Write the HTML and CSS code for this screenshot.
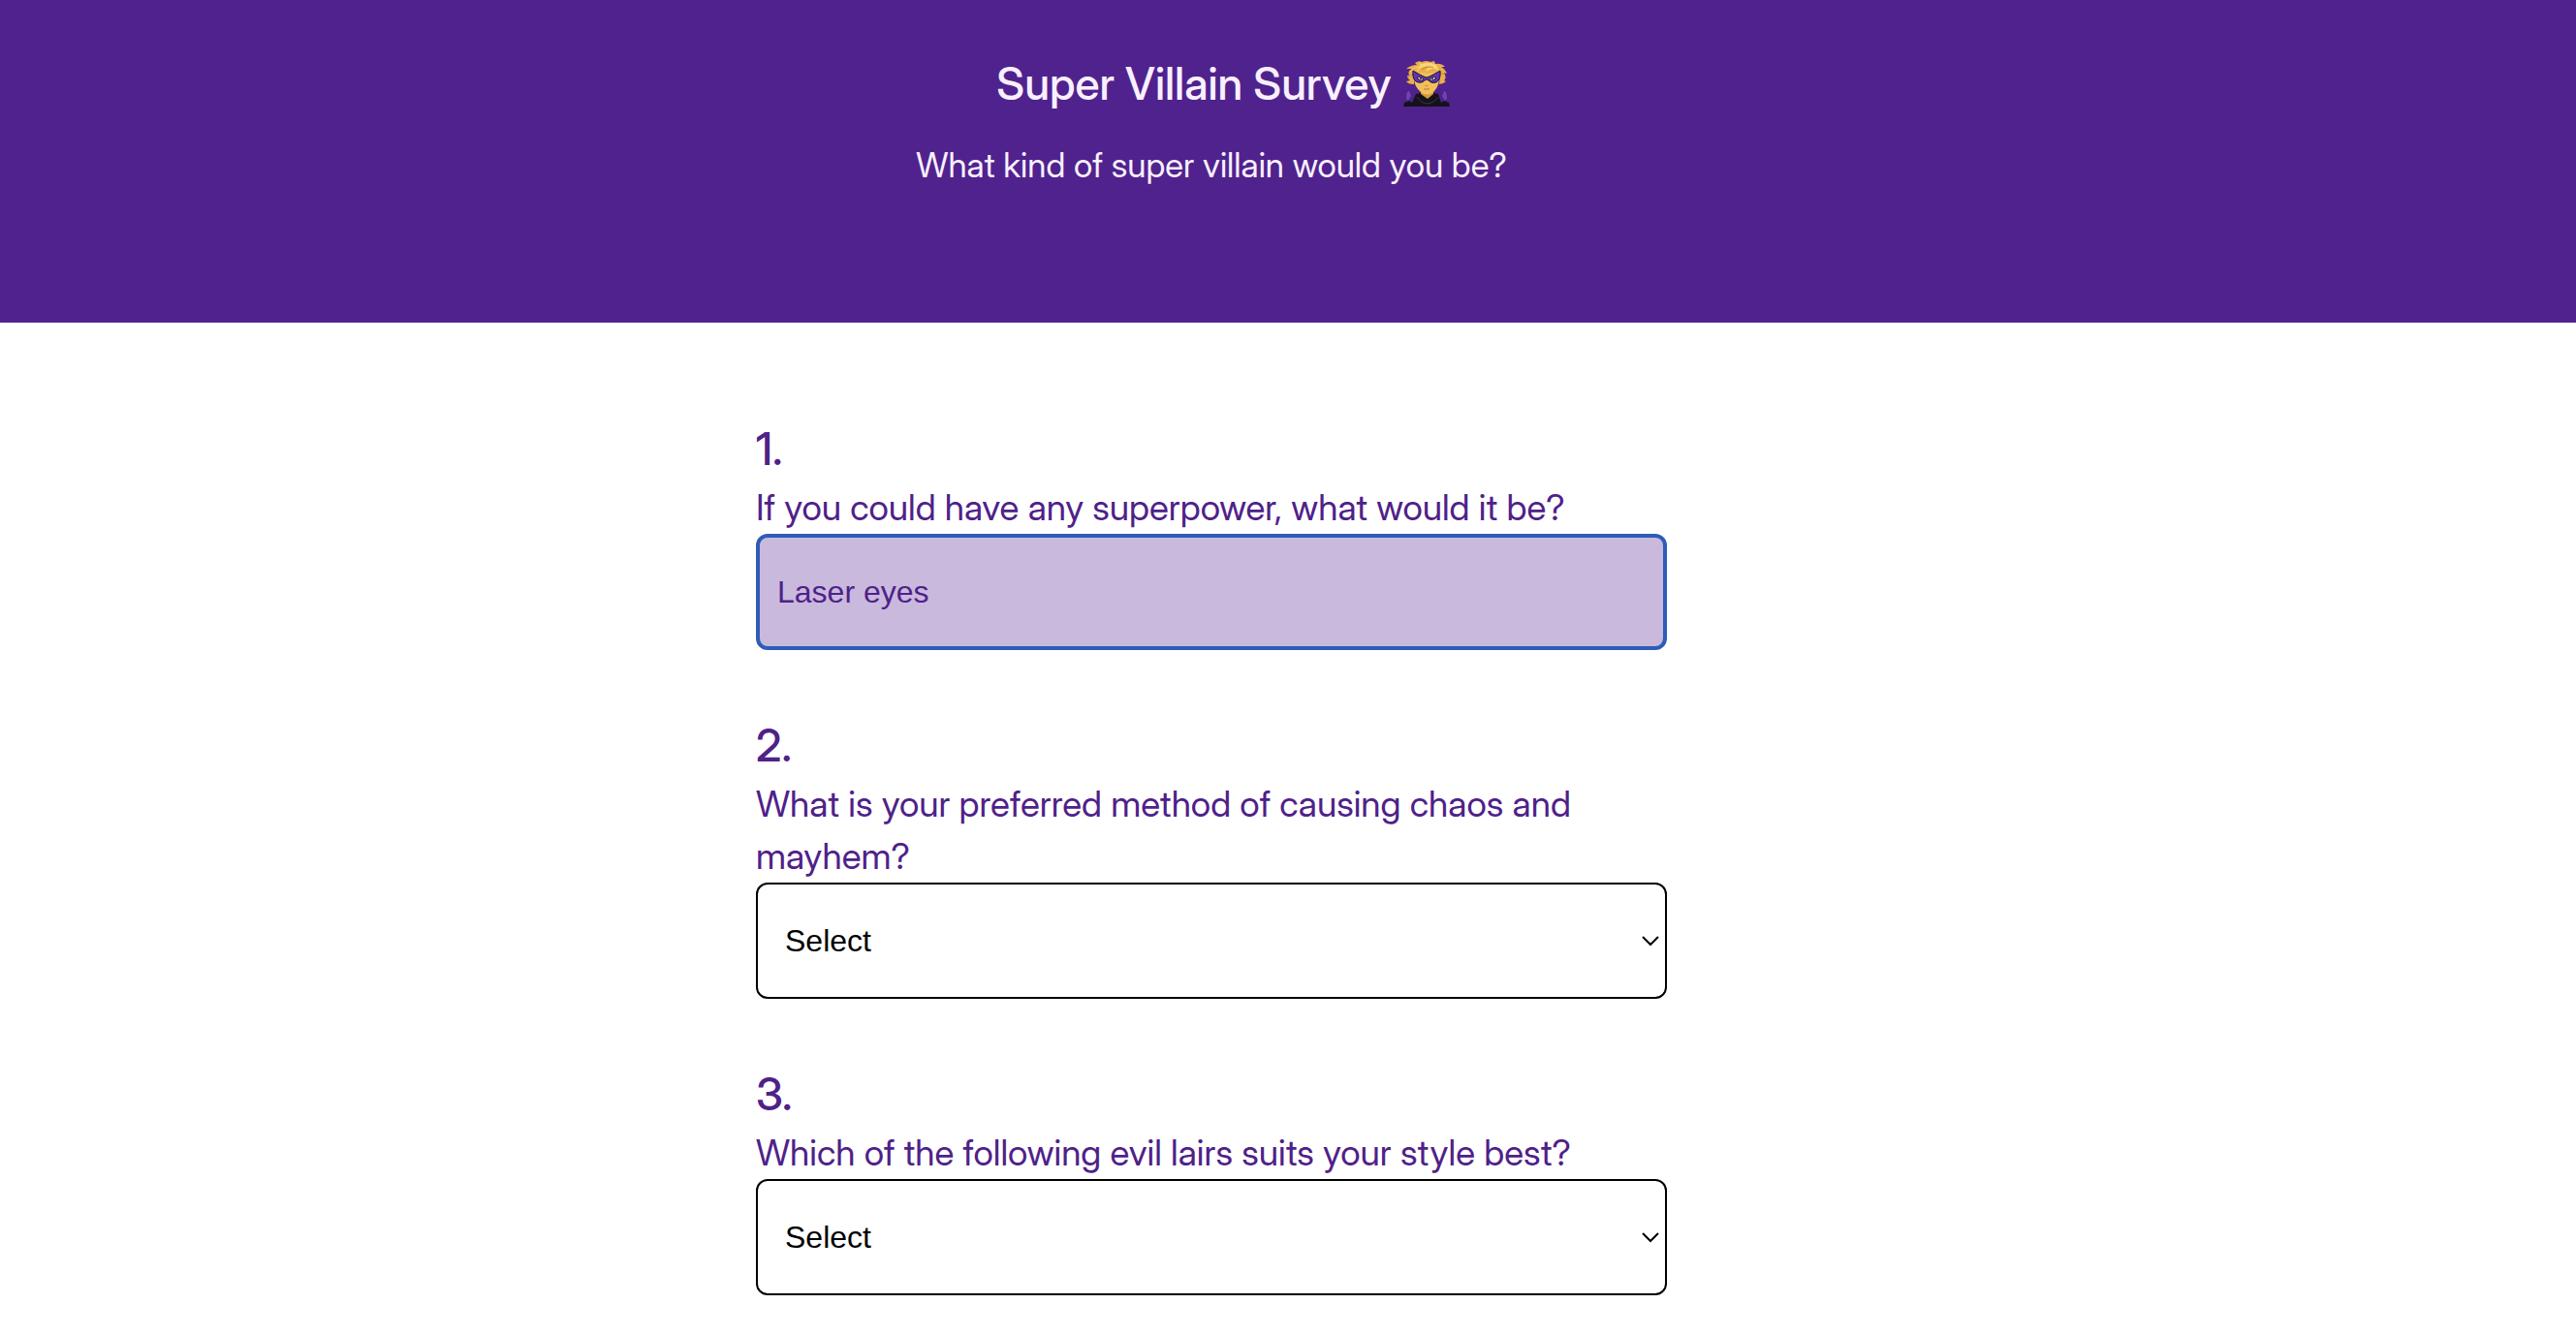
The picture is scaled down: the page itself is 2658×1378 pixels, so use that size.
FILE: index.html
```html
<!DOCTYPE html>
<html lang="en">
<head>
<meta charset="utf-8">
<meta name="viewport" content="width=device-width, initial-scale=1">
<title>Super Villain Survey</title>
<link rel="stylesheet" href="styles.css">
</head>
<body>
<header class="page-grid banner">
  <div class="banner-text">
    <h1 class="title">
      <span>Super Villain Survey</span>
      <svg class="villain" viewBox="0 0 48 48" role="img" aria-label="Supervillain">
        <path fill="#4b2488" d="M1 45C0 38 1 31 4 30Q8 31 11 38L12 47H36L37 38Q40 31 44 30C47 31 48 39 47 45Z"/>
        <path fill="#7340b4" d="M3 40C3 34 4 32 6 32L8 37 5 42ZM45 40C45 34 44 32 42 32L40 37 43 42Z"/>
        <path fill="#15121b" d="M0 48L1 44 6 42 9 44 13 35 18 34 24 39 31 34 36 35 39 44 42 42 47 44 48 48Z"/>
        <path fill="#d79a3c" d="M18 28H31V35L25 40 18 35Z"/>
        <path fill="#f2c05a" d="M12 13C14 8 34 8 36 13C38 22 36 28 31 33Q24 38 18 33C12 28 10 22 12 13Z"/>
        <path fill="#e8b04a" d="M11 25Q5 25 3 22L7 21Q4 19 4 16L6 16Q4 11 9 9L3 9Q8 5 14 5L12 3Q16 0 19 2Q24 0 28 2L32 1L33 4Q39 3 43 7L39 7Q43 9 45 14L42 13Q45 18 42 21L44 22Q41 25 37 25L38 15Q31 11 25 14Q17 11 11 15Z"/>
        <path fill="#f7d67a" d="M7 13Q10 7 17 8Q13 10 14 12Q19 5 28 7Q23 9 24 12Q30 6 37 11Q35 7 34 5Q26 1 20 4L16 3Q20 6 14 7Q9 7 7 13Z"/>
        <path fill="none" stroke="#c68a32" d="M5 18Q8 14 10 15M39 13L42 15M19 10Q25 5 31 8"/>
        <path fill="#6134b2" stroke="#21153f" d="M10 11Q15 14 21 17Q24 19 27 17Q33 14 38 11Q39 20 34 23Q29 25 26 21Q24 19 22 21Q18 25 13 22Q9 19 10 11Z"/>
        <path fill="#fff0d4" stroke="#21153f" d="M14 18Q18 16 21 20Q18 23 14 18ZM34 18Q30 16 27 20Q30 23 34 18Z"/>
        <circle cx="18" cy="19" r="1" fill="#281b23"/>
        <circle cx="30" cy="19" r="1" fill="#281b23"/>
        <path fill="none" stroke="#c98f3b" d="M22 26L24 27 26 26"/>
        <path fill="none" stroke="#b87055" d="M21 30H27"/>
        <path fill="none" stroke="#3b3543" d="M14 38Q19 45 25 45Q32 44 36 38"/>
      </svg>
    </h1>
    <p class="subtitle">What kind of super villain would you be?</p>
  </div>
</header>

<main class="page-grid">
  <form class="survey">
    <div class="question">
      <h2 class="number">1.</h2>
      <label class="prompt" for="superpower">If you could have any superpower, what would it be?</label>
      <input class="control text-control" id="superpower" name="superpower" type="text" value="Laser eyes">
    </div>

    <div class="question">
      <h2 class="number">2.</h2>
      <label class="prompt" for="method">What is your preferred method of causing chaos and mayhem?</label>
      <div class="select-wrap">
        <select class="control select-control" id="method" name="method">
          <option>Select</option>
        </select>
        <svg class="chevron" viewBox="0 0 18 12" aria-hidden="true"><path d="M1 2L9 10L17 2"/></svg>
      </div>
    </div>

    <div class="question">
      <h2 class="number">3.</h2>
      <label class="prompt" for="lair">Which of the following evil lairs suits your style best?</label>
      <div class="select-wrap">
        <select class="control select-control" id="lair" name="lair">
          <option>Select</option>
        </select>
        <svg class="chevron" viewBox="0 0 18 12" aria-hidden="true"><path d="M1 2L9 10L17 2"/></svg>
      </div>
    </div>
  </form>
</main>
</body>
</html>
```

FILE: styles.css
```css
* {
  box-sizing: border-box;
}

body {
  margin: 0;
  background: #fff;
  color: #4f2189;
  font-family: "Inter Display", Inter, "Liberation Sans", sans-serif;
  font-size: 37px;
  line-height: 54px;
}

.page-grid {
  display: grid;
  grid-template-columns: 390fr minmax(0, 940px) 469fr;
}

.banner {
  padding: 50px 0 136px;
  background: #50228d;
  color: #f8f0ff;
}

.banner-text,
.survey {
  grid-column: 2;
}

.banner-text {
  display: flex;
  flex-direction: column;
  align-items: center;
  gap: 21px;
}

.title,
.number {
  margin: 0;
  font-size: 46px;
  font-weight: 500;
}

.title {
  display: flex;
  align-items: center;
  gap: 12px;
  padding-left: 24px;
  line-height: 72px;
}

.villain {
  width: 48px;
  height: 48px;
}

.subtitle {
  margin: 0;
  font-size: 35px;
}

.survey {
  display: flex;
  flex-direction: column;
  gap: 64px;
  padding: 96px 0 40px;
}

.number {
  line-height: 68px;
}

.prompt {
  display: block;
}

.control {
  display: block;
  width: 100%;
  height: 120px;
  margin: 0;
  border: 2px solid #000;
  border-radius: 12px;
  background: #fff;
  color: #000;
  font-family: "Liberation Sans", Arial, sans-serif;
  font-size: 32px;
}

.text-control {
  padding: 0 18px;
  border: 4px solid #2e5cb8;
  background: #c9b9dd;
  color: #4f2189;
  outline: none;
}

.select-wrap {
  display: grid;
  align-items: center;
}

.select-control,
.chevron {
  grid-area: 1 / 1;
}

.select-control {
  padding: 0 28px;
  appearance: none;
}

.chevron {
  justify-self: end;
  width: 18px;
  height: 12px;
  margin-right: 8px;
  fill: none;
  stroke: #000;
  stroke-width: 2;
  pointer-events: none;
}
```
